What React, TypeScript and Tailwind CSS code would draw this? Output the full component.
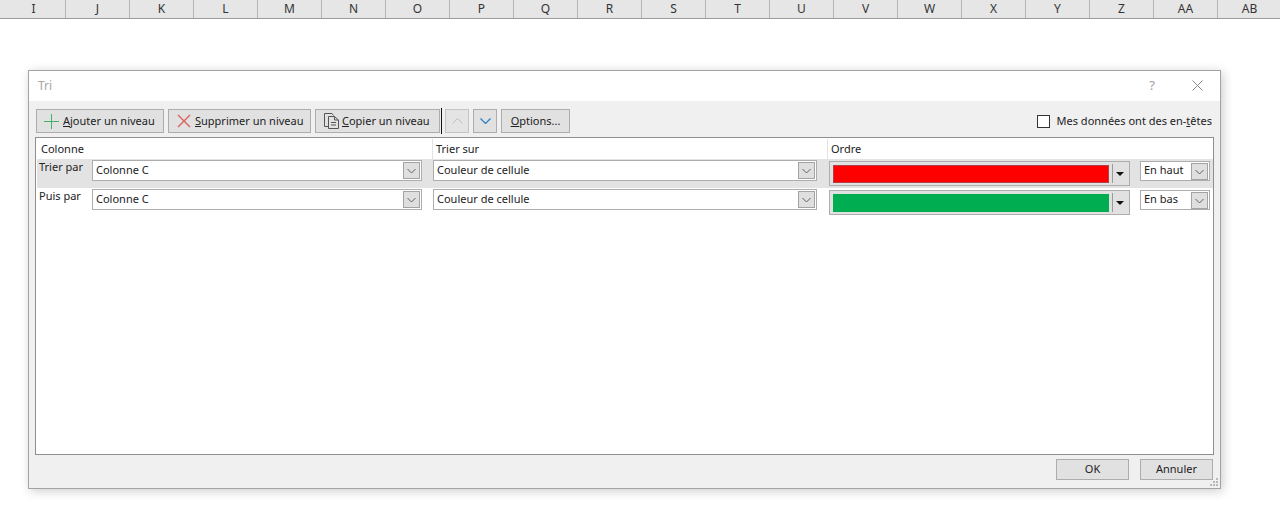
const F = "[font-family:'Noto_Sans',sans-serif]";

const columns = ["I","J","K","L","M","N","O","P","Q","R","S","T","U","V","W","X","Y","Z","AA","AB"];

function Chevron({ color = "#606060", size = 9 }: { color?: string; size?: number }) {
  return (
    <svg width={size} height={size - 3} viewBox="0 0 9 6" fill="none">
      <path d="M0.5 1 L4.5 5 L8.5 1" stroke={color} strokeWidth="1" />
    </svg>
  );
}

function Select({ text, widthClass, hClass = "h-[21px]", textClass = "" }: { text: string; widthClass: string; hClass?: string; textClass?: string }) {
  return (
    <div className={`${widthClass} ${hClass} flex items-start justify-between bg-white border border-[#adadad] pl-[3px] pr-[1px] pt-[1px]`}>
      <span className={`text-[11px] leading-[16px] text-[#222] ${textClass}`}>{text}</span>
      <span className="w-[17px] h-[17px] flex items-center justify-center bg-[#dfdfdf] border border-[#a3a3a3]">
        <Chevron />
      </span>
    </div>
  );
}

function ColorCombo({ swatch }: { swatch: string }) {
  return (
    <div className="w-[301px] h-[25px] flex items-center bg-[#e1e1e1] border border-[#adadad] pl-[3px]">
      <div className={`w-[276px] h-[18px] ${swatch}`} />
      <div className="ml-[3px] w-px h-[19px] bg-[#9a9a9a]" />
      <svg className="ml-[3px]" width="8" height="4" viewBox="0 0 8 4"><path d="M0 0 H8 L4 4 Z" fill="#111" /></svg>
    </div>
  );
}

function ToolButton({ children, widthClass }: { children: React.ReactNode; widthClass: string }) {
  return (
    <button className={`${widthClass} h-[24px] flex items-center bg-[#e1e1e1] border border-[#adadad] text-[11px] text-[#222] whitespace-nowrap`}>
      {children}
    </button>
  );
}

function Row({ label, bandClass, swatch, dir }: { label: string; bandClass: string; swatch: string; dir: string }) {
  return (
    <div className={`h-[29px] ml-px pt-px flex items-start ${bandClass}`}>
      <span className="w-[55px] pl-[2px] text-[11px] leading-[14px] text-[#222]">{label}</span>
      <Select text="Colonne C" widthClass="w-[330px]" />
      <div className="w-[11px]" />
      <Select text="Couleur de cellule" widthClass="w-[384px]" />
      <div className="w-[12px]" />
      <div className="pt-[1px]"><ColorCombo swatch={swatch} /></div>
      <div className="w-[10px]" />
      <div className="pt-[1px]"><Select text={dir} widthClass="w-[70px]" hClass="h-[20px]" textClass="-mt-[1px]" /></div>
    </div>
  );
}

export default function App() {
  return (
    <div className={`w-[1280px] h-[508px] overflow-hidden bg-white ${F}`}>
      <div className="h-[19px] flex pl-[2px] bg-[#e6e6e6] border-b border-[#9b9b9b]">
        {columns.map((c) => (
          <div key={c} className="w-[64px] shrink-0 h-[18px] flex items-center justify-center border-r border-[#b5b5b5] text-[12px] text-[#333]">
            {c}
          </div>
        ))}
      </div>

      <div className="ml-[28px] mt-[51px] w-[1193px] h-[419px] flex flex-col bg-[#f0f0f0] border border-[#a3a3a3] shadow-[2px_2px_10px_rgba(0,0,0,0.2)] relative">
        <div className="h-[30px] shrink-0 flex items-center bg-white pl-[9px]">
          <span className="text-[12px] text-[#a6a6a6]">Tri</span>
          <span className="ml-auto mr-[37px] text-[13px] text-[#a0a0a0]">?</span>
          <svg className="mr-[17px] -mt-[2px]" width="11" height="11" viewBox="0 0 11 11" fill="none">
            <path d="M0.5 0.5 L10.5 10.5 M10.5 0.5 L0.5 10.5" stroke="#8a8a8a" strokeWidth="1" />
          </svg>
        </div>

        <div className="h-[36px] shrink-0 flex items-start pt-[8px] pl-[7px] pr-[8px]">
          <ToolButton widthClass="w-[128px]">
            <svg className="ml-[7px] mr-[4px]" width="15" height="15" viewBox="0 0 15 15" fill="none">
              <path d="M7 0 H8 V7 H15 V8 H8 V15 H7 V8 H0 V7 H7 Z" fill="#45b06a" />
            </svg>
            <span><u>A</u>jouter un niveau</span>
          </ToolButton>
          <div className="w-[4px]" />
          <ToolButton widthClass="w-[143px]">
            <svg className="ml-[8px] mr-[4px]" width="14" height="14" viewBox="0 0 14 14" fill="none">
              <path d="M1 1 L13 13 M13 1 L1 13" stroke="#d9625c" strokeWidth="1.4" />
            </svg>
            <span><u>S</u>upprimer un niveau</span>
          </ToolButton>
          <div className="w-[4px]" />
          <ToolButton widthClass="w-[125px]">
            <svg className="ml-[7px] mr-[2px]" width="17" height="16" viewBox="0 0 17 16" fill="none">
              <path d="M6 0.5 H1.5 V13.5 H5 M6 0.5 H9 L10.5 2.5" stroke="#555" />
              <path d="M5.5 3.5 H11.5 L15.5 7 V15.5 H5.5 Z M11.5 3.5 V7 H15.5 M8 9.5 H13 M8 12 H13" stroke="#555" />
            </svg>
            <span><u>C</u>opier un niveau</span>
          </ToolButton>
          <div className="ml-[1px] -mt-[1px] w-[1px] h-[26px] bg-[#111]" />
          <div className="w-[3px]" />
          <div className="w-[24px] h-[24px] flex items-center justify-center bg-[#e4e4e4] border border-[#c4c4c4]">
            <svg width="11" height="6" viewBox="0 0 11 6" fill="none"><path d="M0.5 5.5 L5.5 0.5 L10.5 5.5" stroke="#bdbdbd" /></svg>
          </div>
          <div className="w-[4px]" />
          <div className="w-[24px] h-[24px] flex items-center justify-center bg-[#e1e1e1] border border-[#adadad]">
            <svg width="11" height="6" viewBox="0 0 11 6" fill="none"><path d="M0.5 0.5 L5.5 5.5 L10.5 0.5" stroke="#2f7fc4" strokeWidth="1.3" /></svg>
          </div>
          <div className="w-[4px]" />
          <ToolButton widthClass="w-[69px] justify-center">
            <span><u>O</u>ptions...</span>
          </ToolButton>
          <label className="ml-auto mt-[4px] flex items-center text-[11px] text-[#222]">
            <span className="w-[13px] h-[13px] bg-white border border-[#333] mr-[7px]" />
            <span>Mes données ont des en-<u>t</u>êtes</span>
          </label>
        </div>

        <div className="mx-[6px] h-[318px] shrink-0 bg-white border border-[#8f8f8f]">
          <div className="h-[21px] pt-px flex items-center text-[11px] text-[#222]">
            <span className="w-[396px] pl-[5px]">Colonne</span>
            <span className="w-[395px] pl-[3px] h-full flex items-center border-l border-[#e2e2e2]">Trier sur</span>
            <span className="pl-[3px] h-full flex items-center border-l border-[#e2e2e2]">Ordre</span>
          </div>
          <Row label="Trier par" bandClass="bg-[#e3e3e3]" swatch="bg-[#ff0000] border border-[#b0404a]" dir="En haut" />
          <Row label="Puis par" bandClass="" swatch="bg-[#00ad50]" dir="En bas" />
        </div>

        <div className="flex justify-end pt-[4px] pr-[7px] gap-[11px]">
          <button className="w-[73px] h-[21px] bg-[#e1e1e1] border border-[#adadad] text-[11px] text-[#222]">OK</button>
          <button className="w-[73px] h-[21px] bg-[#e1e1e1] border border-[#adadad] text-[11px] text-[#222]">Annuler</button>
        </div>

        <svg className="absolute right-[1px] bottom-[1px]" width="9" height="9" viewBox="0 0 9 9">
          <path d="M6 0h2v2H6zM3 3h2v2H3zM6 3h2v2H6zM0 6h2v2H0zM3 6h2v2H3zM6 6h2v2H6z" fill="#b8b8b8" />
        </svg>
      </div>
    </div>
  );
}
